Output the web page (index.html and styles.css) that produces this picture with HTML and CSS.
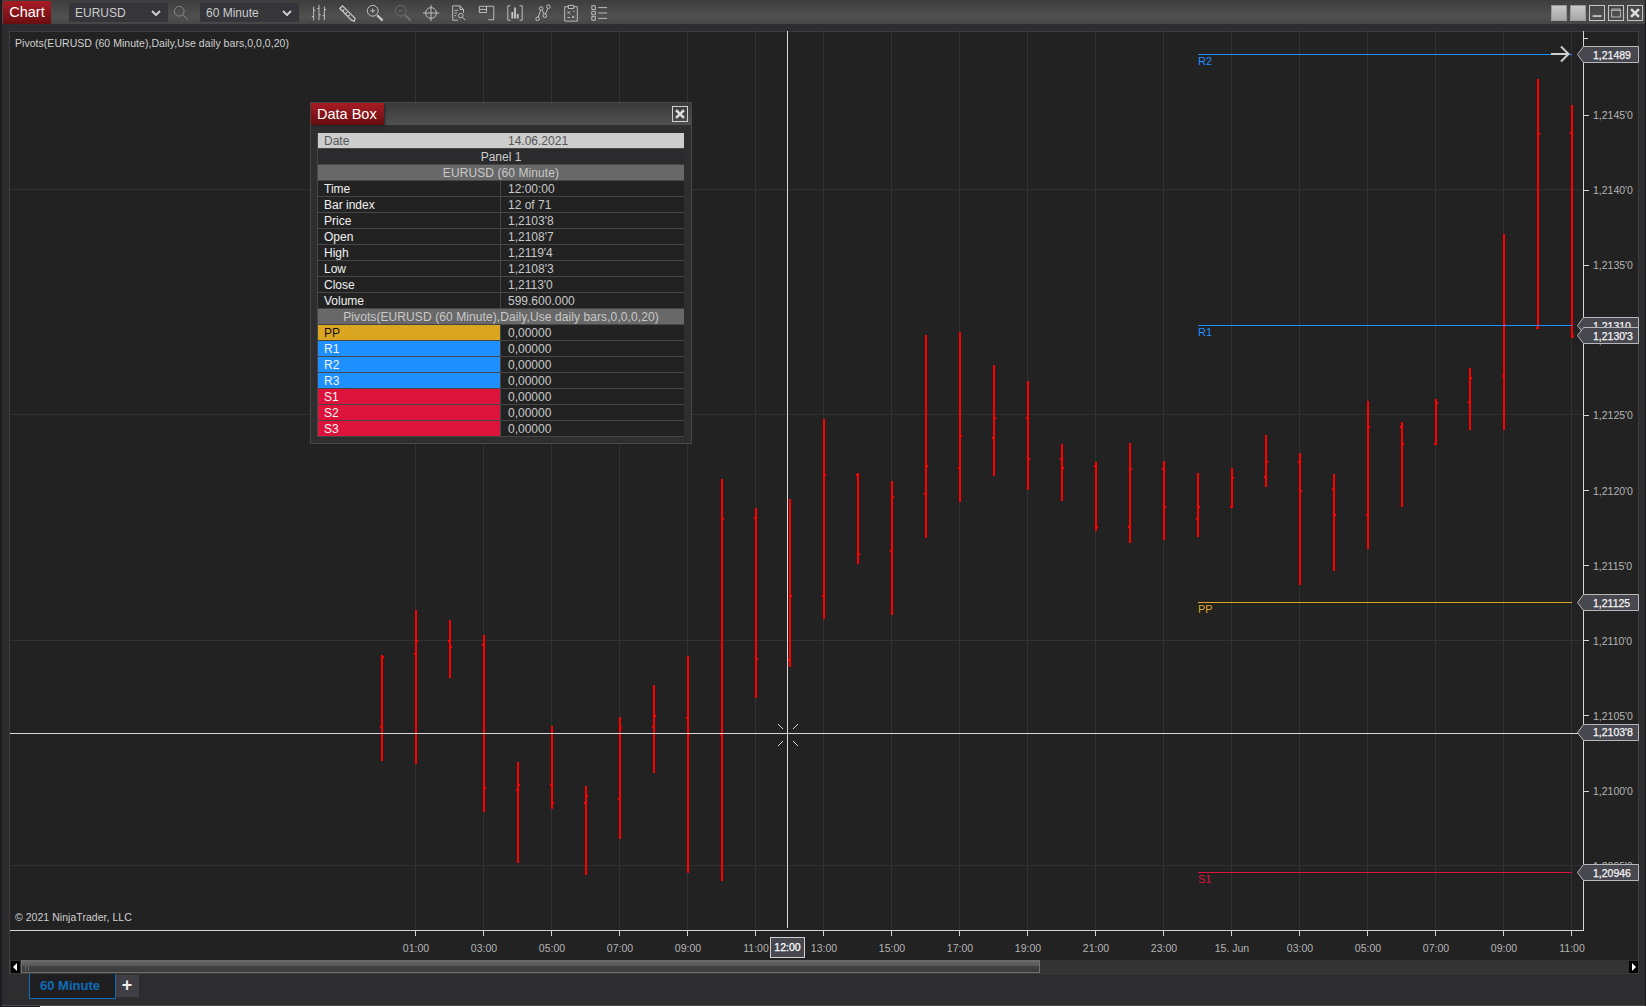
FILE: index.html
```html
<!DOCTYPE html>
<html lang="en">
<head>
<meta charset="utf-8">
<title>Chart</title>
<link rel="stylesheet" href="styles.css">
</head>
<body>
<div class="window">
  <header class="toolbar">
    <div class="chart-tab">Chart</div>
    <div class="select"><span>EURUSD</span><svg class="chev" viewBox="0 0 10 6"><path d="M1 1l4 4 4-4"/></svg></div>
    <svg class="ico dim search" viewBox="0 0 18 18"><circle cx="7" cy="7" r="5.5"/><path d="M11 11l6 6"/></svg>
    <div class="select second"><span>60 Minute</span><svg class="chev" viewBox="0 0 10 6"><path d="M1 1l4 4 4-4"/></svg></div>
    <div class="tools">
      <svg class="ico" viewBox="0 0 20 20"><path d="M4 3v15M2 14h2M4 7h2M10 1v17M8 5h2M10 12h2M16 3v15M14 13h2M16 6h2"/></svg>
      <svg class="ico" viewBox="0 0 20 20"><path d="M2 5l3-3 14 14-1 3-3-1zM5 8l2-2M8 11l2-2M11 14l2-2" stroke-width="1.4"/></svg>
      <svg class="ico" viewBox="0 0 20 20"><circle cx="7.5" cy="7.5" r="6"/><path d="M5 7.5h5M7.5 5v5"/><path class="thick" d="M12.5 12.5l6 6"/></svg>
      <svg class="ico dim" viewBox="0 0 20 20"><circle cx="7.5" cy="7.5" r="6"/><path d="M5 7.5h5"/><path class="thick" d="M12.5 12.5l6 6"/></svg>
      <svg class="ico" viewBox="0 0 20 20"><circle cx="10" cy="10" r="6"/><path d="M10 1v18M1 10h18"/></svg>
      <svg class="ico" viewBox="0 0 20 20"><path d="M9 18H3V2h8l4 4v4M11 2v4h4M5 7h4M5 10h3M5 13h2"/><circle cx="12" cy="13" r="2.5"/><path d="M14 15l3 3"/></svg>
      <svg class="ico" viewBox="0 0 20 20"><path d="M1.500 2.500h8v7h-8zM1.500 6h8M9.500 2.500h8v15h-6"/></svg>
      <svg class="ico" viewBox="0 0 20 20"><path d="M5 2H2v16h3M15 2h3v16h-3"/><path d="M7 16V9M10 16V4M13 16v-5" stroke-width="2"/></svg>
      <svg class="ico" viewBox="0 0 20 20"><circle cx="4" cy="16.500" r="2"/><circle cx="8" cy="5" r="2"/><circle cx="12" cy="13" r="2"/><circle cx="16" cy="3" r="2"/><path d="M4.700 14.600L7.300 7M9 7l2.200 4.300M12.800 11.100L15.300 5"/></svg>
      <svg class="ico" viewBox="0 0 20 20"><path d="M7 3H3v16h14V3h-4M7 1.500h6V5H7zM6 8l3 3M9 8l-3 3M11 13l3 3M14 13l-3 3M12 8h2M6 15h3"/></svg>
      <svg class="ico" viewBox="0 0 20 20"><path d="M2 2h4v4H2zM2 8h4v4H2zM2 14h4v4H2zM9 4h10M9 10h10M9 16h10"/></svg>
    </div>
    <div class="win-btns">
      <div class="win-btn solid"></div>
      <div class="win-btn solid"></div>
      <div class="win-btn"><svg viewBox="0 0 16 16"><path d="M3 11.500h10" stroke-width="2"/></svg></div>
      <div class="win-btn"><svg viewBox="0 0 16 16"><path d="M3 3.500h10v9H3zM3 5h10" /></svg></div>
      <div class="win-btn"><svg viewBox="0 0 16 16"><path class="x" d="M3.500 3.500l9 9M12.500 3.500l-9 9"/></svg></div>
    </div>
  </header>

  <main class="chart">
    <svg class="plot" viewBox="10 31 1629 929" width="1629" height="929">
      <path class="grid" d="M415.500 31V930M483.500 31V930M551.500 31V930M619.500 31V930M687.500 31V930M755.500 31V930M823.500 31V930M891.500 31V930M959.500 31V930M1027.500 31V930M1095.500 31V930M1163.500 31V930M1231.500 31V930M1299.500 31V930M1367.500 31V930M1435.500 31V930M1503.500 31V930M1571.500 31V930M10 189.500H1583M10 414.500H1583M10 640.500H1583M10 865.500H1583"/>

      <text class="note" x="15" y="47">Pivots(EURUSD (60 Minute),Daily,Use daily bars,0,0,0,20)</text>
      <text class="note" x="15" y="921">© 2021 NinjaTrader, LLC</text>

      <path class="bars" d="M382 655V761M380 727H382M384 657H382
      M416 610V764M414 654H416M418 641H416
      M450 620V678M448 641H450M452 647H450
      M484 635V812M482 645H484M486 788H484
      M518 762V863M516 790H518M520 785H518
      M552 726V809M550 785H552M554 803H552
      M586 786V875M584 803H586M588 796H586
      M620 717V839M618 799H620M622 728H620
      M654 685V773M652 727H654M656 716H654
      M688 656V873M686 718H688M690 734H688
      M722 479V881M720 734H722M724 519H722
      M756 508V698M754 518H756M758 659H756
      M790 499V667M788 660H790M792 596H790
      M824 419V619M822 596H824M826 475H824
      M858 473V564M856 475H858M860 554H858
      M892 481V615M890 551H892M894 497H892
      M926 335V538M924 494H926M928 466H926
      M960 332V502M958 468H960M962 436H960
      M994 365V476M992 438H994M996 418H994
      M1028 381V490M1026 418H1028M1030 459H1028
      M1062 444V501M1060 459H1062M1064 468H1062
      M1096 462V531M1094 466H1096M1098 527H1096
      M1130 443V543M1128 527H1130M1132 469H1130
      M1164 461V540M1162 469H1164M1166 507H1164
      M1198 473V537M1196 519H1198M1200 507H1198
      M1232 468V508M1230 507H1232M1234 478H1232
      M1266 435V487M1264 477H1266M1268 462H1266
      M1300 453V585M1298 462H1300M1302 491H1300
      M1334 474V571M1332 489H1334M1336 515H1334
      M1368 401V549M1366 515H1368M1370 427H1368
      M1402 422V507M1400 427H1402M1404 444H1402
      M1436 399V445M1434 444H1436M1438 403H1436
      M1470 368V430M1468 402H1470M1472 378H1470
      M1504 234V430M1502 376H1504M1506 325H1504
      M1538 79V329M1536 328H1538M1540 134H1538
      M1572 105V338M1570 133H1572M1574 336H1572"/>

      <path class="line blue" d="M1198 54.500H1572M1198 325.500H1572"/>
      <path class="line gold" d="M1198 602.500H1572"/>
      <path class="line red" d="M1198 872.500H1572"/>
      <text class="plabel t-blue" x="1198" y="65">R2</text>
      <text class="plabel t-blue" x="1198" y="336">R1</text>
      <text class="plabel t-gold" x="1198" y="613">PP</text>
      <text class="plabel t-red" x="1198" y="883">S1</text>

      <path class="arrow" d="M1551 54H1568M1561 46.500L1568.500 54L1561 61.500"/>

      <path class="axis" d="M1583.500 31V930.500H10"/>
      <path class="axis" d="M1583 38.500h5M1583 115.500h6M1583 190.500h6M1583 265.500h6M1583 340.500h6M1583 415.500h6M1583 490.500h6M1583 565.500h6M1583 640.500h6M1583 715.500h6M1583 791.500h6M1583 866.500h6M415.500 930v6M483.500 930v6M551.500 930v6M619.500 930v6M687.500 930v6M755.500 930v6M823.500 930v6M891.500 930v6M959.500 930v6M1027.500 930v6M1095.500 930v6M1163.500 930v6M1231.500 930v6M1299.500 930v6M1367.500 930v6M1435.500 930v6M1503.500 930v6M1571.500 930v6"/>

      <g class="ylabels">
        <text x="1593" y="119">1,2145'0</text>
        <text x="1593" y="194">1,2140'0</text>
        <text x="1593" y="269">1,2135'0</text>
        <text x="1593" y="344">1,2130'0</text>
        <text x="1593" y="419">1,2125'0</text>
        <text x="1593" y="495">1,2120'0</text>
        <text x="1593" y="570">1,2115'0</text>
        <text x="1593" y="645">1,2110'0</text>
        <text x="1593" y="720">1,2105'0</text>
        <text x="1593" y="795">1,2100'0</text>
        <text x="1593" y="870">1,2095'0</text>
      </g>
      <g class="xlabels">
        <text x="416" y="952">01:00</text>
        <text x="484" y="952">03:00</text>
        <text x="552" y="952">05:00</text>
        <text x="620" y="952">07:00</text>
        <text x="688" y="952">09:00</text>
        <text x="756" y="952">11:00</text>
        <text x="824" y="952">13:00</text>
        <text x="892" y="952">15:00</text>
        <text x="960" y="952">17:00</text>
        <text x="1028" y="952">19:00</text>
        <text x="1096" y="952">21:00</text>
        <text x="1164" y="952">23:00</text>
        <text x="1232" y="952">15. Jun</text>
        <text x="1300" y="952">03:00</text>
        <text x="1368" y="952">05:00</text>
        <text x="1436" y="952">07:00</text>
        <text x="1504" y="952">09:00</text>
        <text x="1572" y="952">11:00</text>
      </g>

      <path class="cross" d="M787.500 31V928M10 733.500H1583"/>
      <path class="cross-tick" d="M778 724l5 5M798 724l-5 5M778 746l5-5M798 746l-5-5"/>

      <g class="tag">
        <polygon points="1577.500,54.500 1583.500,46.500 1638.500,46.500 1638.500,62.500 1583.500,62.500"/>
        <text x="1593" y="58.500">1,21489</text>
      </g>
      <g class="tag">
        <polygon points="1577.500,325.500 1583.500,317.500 1638.500,317.500 1638.500,333.500 1583.500,333.500"/>
        <text x="1593" y="329.500">1,21310</text>
      </g>
      <g class="tag">
        <polygon points="1577.500,335.500 1583.500,327.500 1638.500,327.500 1638.500,343.500 1583.500,343.500"/>
        <text x="1593" y="339.500">1,2130'3</text>
      </g>
      <g class="tag">
        <polygon points="1577.500,602.500 1583.500,594.500 1638.500,594.500 1638.500,610.500 1583.500,610.500"/>
        <text x="1593" y="606.500">1,21125</text>
      </g>
      <g class="tag">
        <polygon points="1577.500,732.500 1583.500,724.500 1638.500,724.500 1638.500,740.500 1583.500,740.500"/>
        <text x="1593" y="736">1,2103'8</text>
      </g>
      <g class="tag">
        <polygon points="1577.500,872.500 1583.500,864.500 1638.500,864.500 1638.500,880.500 1583.500,880.500"/>
        <text x="1593" y="876.500">1,20946</text>
      </g>
      <g class="time-tag">
        <rect x="770.500" y="937.500" width="34" height="20"/>
        <text x="787.500" y="951">12:00</text>
      </g>
    </svg>

    <div class="scrollbar">
      <div class="sb-btn"><svg viewBox="0 0 9 12"><path d="M6 2v8L2 6z"/></svg></div>
      <div class="sb-track">
        <div class="sb-thumb"><span class="grip"></span></div>
      </div>
      <div class="sb-btn"><svg viewBox="0 0 9 12"><path d="M3 2v8l4-4z"/></svg></div>
    </div>

    <section class="databox">
      <div class="db-title">
        <div class="db-tab">Data Box</div>
        <div class="db-close"><svg viewBox="0 0 16 16"><path d="M3.500 3.500l9 9M12.500 3.500l-9 9"/></svg></div>
      </div>
      <div class="db-table">
        <div class="c date">Date</div><div class="c date v">14.06.2021</div>
        <div class="c span panel">Panel 1</div>
        <div class="c span head">EURUSD (60 Minute)</div>
        <div class="c k">Time</div><div class="c v">12:00:00</div>
        <div class="c k">Bar index</div><div class="c v">12 of 71</div>
        <div class="c k">Price</div><div class="c v">1,2103'8</div>
        <div class="c k">Open</div><div class="c v">1,2108'7</div>
        <div class="c k">High</div><div class="c v">1,2119'4</div>
        <div class="c k">Low</div><div class="c v">1,2108'3</div>
        <div class="c k">Close</div><div class="c v">1,2113'0</div>
        <div class="c k">Volume</div><div class="c v">599.600.000</div>
        <div class="c span head">Pivots(EURUSD (60 Minute),Daily,Use daily bars,0,0,0,20)</div>
        <div class="c k gold-bg">PP</div><div class="c v">0,00000</div>
        <div class="c k blue-bg">R1</div><div class="c v">0,00000</div>
        <div class="c k blue-bg">R2</div><div class="c v">0,00000</div>
        <div class="c k blue-bg">R3</div><div class="c v">0,00000</div>
        <div class="c k red-bg">S1</div><div class="c v">0,00000</div>
        <div class="c k red-bg">S2</div><div class="c v">0,00000</div>
        <div class="c k red-bg">S3</div><div class="c v">0,00000</div>
      </div>
    </section>
  </main>

  <footer class="tabs">
    <div class="tab">60 Minute</div>
    <div class="tab-add">+</div>
  </footer>
</div>
<div class="strip"></div>
</body>
</html>
```
FILE: styles.css
```css
* { box-sizing: border-box; }
html, body { margin: 0; height: 100%; overflow: hidden; background: #1c1c1e; }
body { font-family: "Liberation Sans", Arial, sans-serif; }

.window {
  height: 1006px;
  margin-left: 2px;
  margin-right: 1px;
  background: #2d2d2f;
  border-bottom: 1px solid #4a4a4a;
  display: flex;
  flex-direction: column;
}

/* toolbar */
.toolbar {
  height: 24px;
  flex: none;
  padding-top: 1px;
  display: flex;
  align-items: center;
  background: linear-gradient(#3e3e3e, #505050 70%, #464646);
  color: #ccc;
  font-size: 12px;
}
.chart-tab {
  width: 48px;
  height: 23px;
  margin-left: 1px;
  background: linear-gradient(#a81c22, #6a0e12);
  color: #fff;
  font-size: 14.500px;
  line-height: 23px;
  text-align: center;
}
.select {
  width: 99px;
  height: 19px;
  margin-left: 18px;
  padding: 0 6px;
  background: #35353a;
  display: flex;
  align-items: center;
  justify-content: space-between;
}
.select.second { margin-left: 11px; }
.chev { width: 10px; height: 6px; margin-right: 1px; }
.chev path { fill: none; stroke: #ccc; stroke-width: 2; }
.ico { width: 18px; height: 18px; flex: none; fill: none; stroke: #c8c8c8; stroke-width: 1; }
.ico .thick { stroke-width: 2.5; }
.ico.dim { stroke: #6e6e6e; }
.ico.search { width: 16px; height: 16px; margin-left: 5px; stroke: #8c8c8c; }
.tools { display: flex; align-items: center; gap: 10px; margin-left: 11px; }
.win-btns { margin-left: auto; margin-right: 2px; display: flex; gap: 3px; }
.win-btn { width: 16px; height: 16px; border: 1px solid #c4c4c4; }
.win-btn.solid { background: linear-gradient(#c8c8c8, #a8a8a8); border-color: #999; }
.win-btn svg { display: block; width: 14px; height: 14px; fill: none; stroke: #c8c8c8; stroke-width: 1; }
.win-btn .x { stroke: #ddd; stroke-width: 3; }

/* chart */
.chart {
  position: relative;
  margin: 7px 6px 0 7px;
  height: 943px;
  flex: none;
  border: 1px solid #3c3c3c;
  background: #222;
  width: 1630px;
}
.plot { display: block; margin-top: -1px; margin-left: 0; font-family: "Liberation Sans", Arial, sans-serif; }
.grid { fill: none; stroke: #313131; stroke-width: 1; shape-rendering: crispEdges; }
.bars { fill: none; stroke: #ff0000; stroke-width: 2; }
.line { fill: none; stroke-width: 1; shape-rendering: crispEdges; }
.blue { stroke: #1e90ff; }
.gold { stroke: #daa520; }
.red { stroke: #dc143c; }
.plabel { font-size: 11px; }
.t-blue { fill: #1e90ff; }
.t-gold { fill: #daa520; }
.t-red { fill: #dc143c; }
.note { fill: #d0d0d0; font-size: 10.500px; letter-spacing: 0.04px; }
.arrow { fill: none; stroke: #cfcfcf; stroke-width: 2; }
.axis { fill: none; stroke: #d4d4d4; stroke-width: 1; shape-rendering: crispEdges; }
.cross { fill: none; stroke: #d8d8d8; stroke-width: 1; shape-rendering: crispEdges; }
.cross-tick { fill: none; stroke: #d8d8d8; stroke-width: 1; }
.ylabels text { fill: #b4b4b4; font-size: 10.500px; }
.xlabels text { fill: #b4b4b4; font-size: 10.500px; text-anchor: middle; }
.tag polygon { fill: #47474f; stroke: #b8b8b8; stroke-width: 1; }
.tag text { fill: #f4f4f4; stroke: #f4f4f4; stroke-width: 0.25px; font-size: 10.500px; }
.time-tag rect { fill: #47474f; stroke: #d0d0d0; stroke-width: 1; }
.time-tag text { fill: #fff; stroke: #fff; stroke-width: 0.25px; font-size: 10.500px; text-anchor: middle; }

/* scrollbar */
.scrollbar {
  height: 13px;
  display: flex;
  align-items: stretch;
  background: #333;
  padding: 1px 0 0 1px;
}
.sb-btn { width: 9px; height: 12px; background: #000; flex: none; }
.sb-btn svg { display: block; width: 9px; height: 12px; fill: #fff; }
.sb-track { flex: 1; padding: 0 0 0 1px; }
.sb-thumb {
  width: 1019px;
  height: 13px;
  margin-top: -1px;
  background: linear-gradient(#6c6c6c, #565656 50%, #404040 52%, #3c3c3c);
  border-bottom: 1px solid #707070;
  border-left: 1px solid #707070;
  border-right: 1px solid #707070;
  padding: 5px 0 0 3px;
}
.grip { display: block; width: 4px; height: 6px; border-left: 1px solid #666; border-right: 1px solid #666; }

/* data box */
.databox {
  position: absolute;
  left: 300px;
  top: 70px;
  width: 382px;
  height: 342px;
  background: #2e2e30;
  border: 1px solid #484848;
}
.db-title {
  height: 22px;
  background: linear-gradient(#3a3a3a, #505050);
  display: flex;
  align-items: center;
  justify-content: space-between;
}
.db-tab {
  width: 73px;
  height: 22px;
  background: linear-gradient(#a81c22, #660d11);
  box-shadow: 1px 1px 2px #222;
  color: #fff;
  font-size: 14.500px;
  line-height: 22px;
  padding-left: 6px;
}
.db-close { width: 16px; height: 16px; border: 1px solid #d0d0d0; margin-right: 3px; }
.db-close svg { display: block; width: 14px; height: 14px; fill: none; stroke: #ddd; stroke-width: 3; }
.db-table {
  margin: 8px 0 0 6px;
  width: 367px;
  display: grid;
  grid-template-columns: 182px 183px;
  grid-auto-rows: 15px;
  gap: 1px;
  background: #464646;
  border-right: 1px solid #464646;
  border-left: 1px solid #464646;
  border-bottom: 1px solid #464646;
  font-size: 12px;
  line-height: 17px;
}
.c { background: #222; white-space: nowrap; }
.k { color: #f0f0f0; padding-left: 6px; }
.v { color: #c8c8c8; padding-left: 7px; }
.span { grid-column: 1 / -1; text-align: center; }
.date { background: #cdcdcd; color: #555; padding-left: 6px; }
.date.v { padding-left: 7px; box-shadow: -1px 0 0 #cdcdcd; }
.panel { background: #2b2b2d; color: #ccc; }
.head { background: #686868; color: #c8c8c8; letter-spacing: 0.09px; }
.gold-bg { background: #daa520; color: #111; }
.blue-bg { background: #1e90ff; color: #f4f4f4; }
.red-bg { background: #dc143c; color: #f4f4f4; }

/* tabs */
.tabs { height: 25px; flex: none; display: flex; align-items: flex-start; padding-left: 27px; }
.tab {
  width: 87px;
  height: 25px;
  background: #1e1e20;
  border: 1px solid #0f6cb8;
  border-top: none;
  color: #0f6cb8;
  font-size: 13px;
  font-weight: 700;
  line-height: 23px;
  padding-left: 10px;
}
.tab-add {
  width: 23px;
  height: 22px;
  margin-top: 1px;
  background: #3e3e44;
  color: #eee;
  font-size: 18px;
  font-weight: 700;
  line-height: 21px;
  text-align: center;
  text-indent: -1px;
}
.strip { height: 1px; margin-left: 40px; background: #fff; }
```
